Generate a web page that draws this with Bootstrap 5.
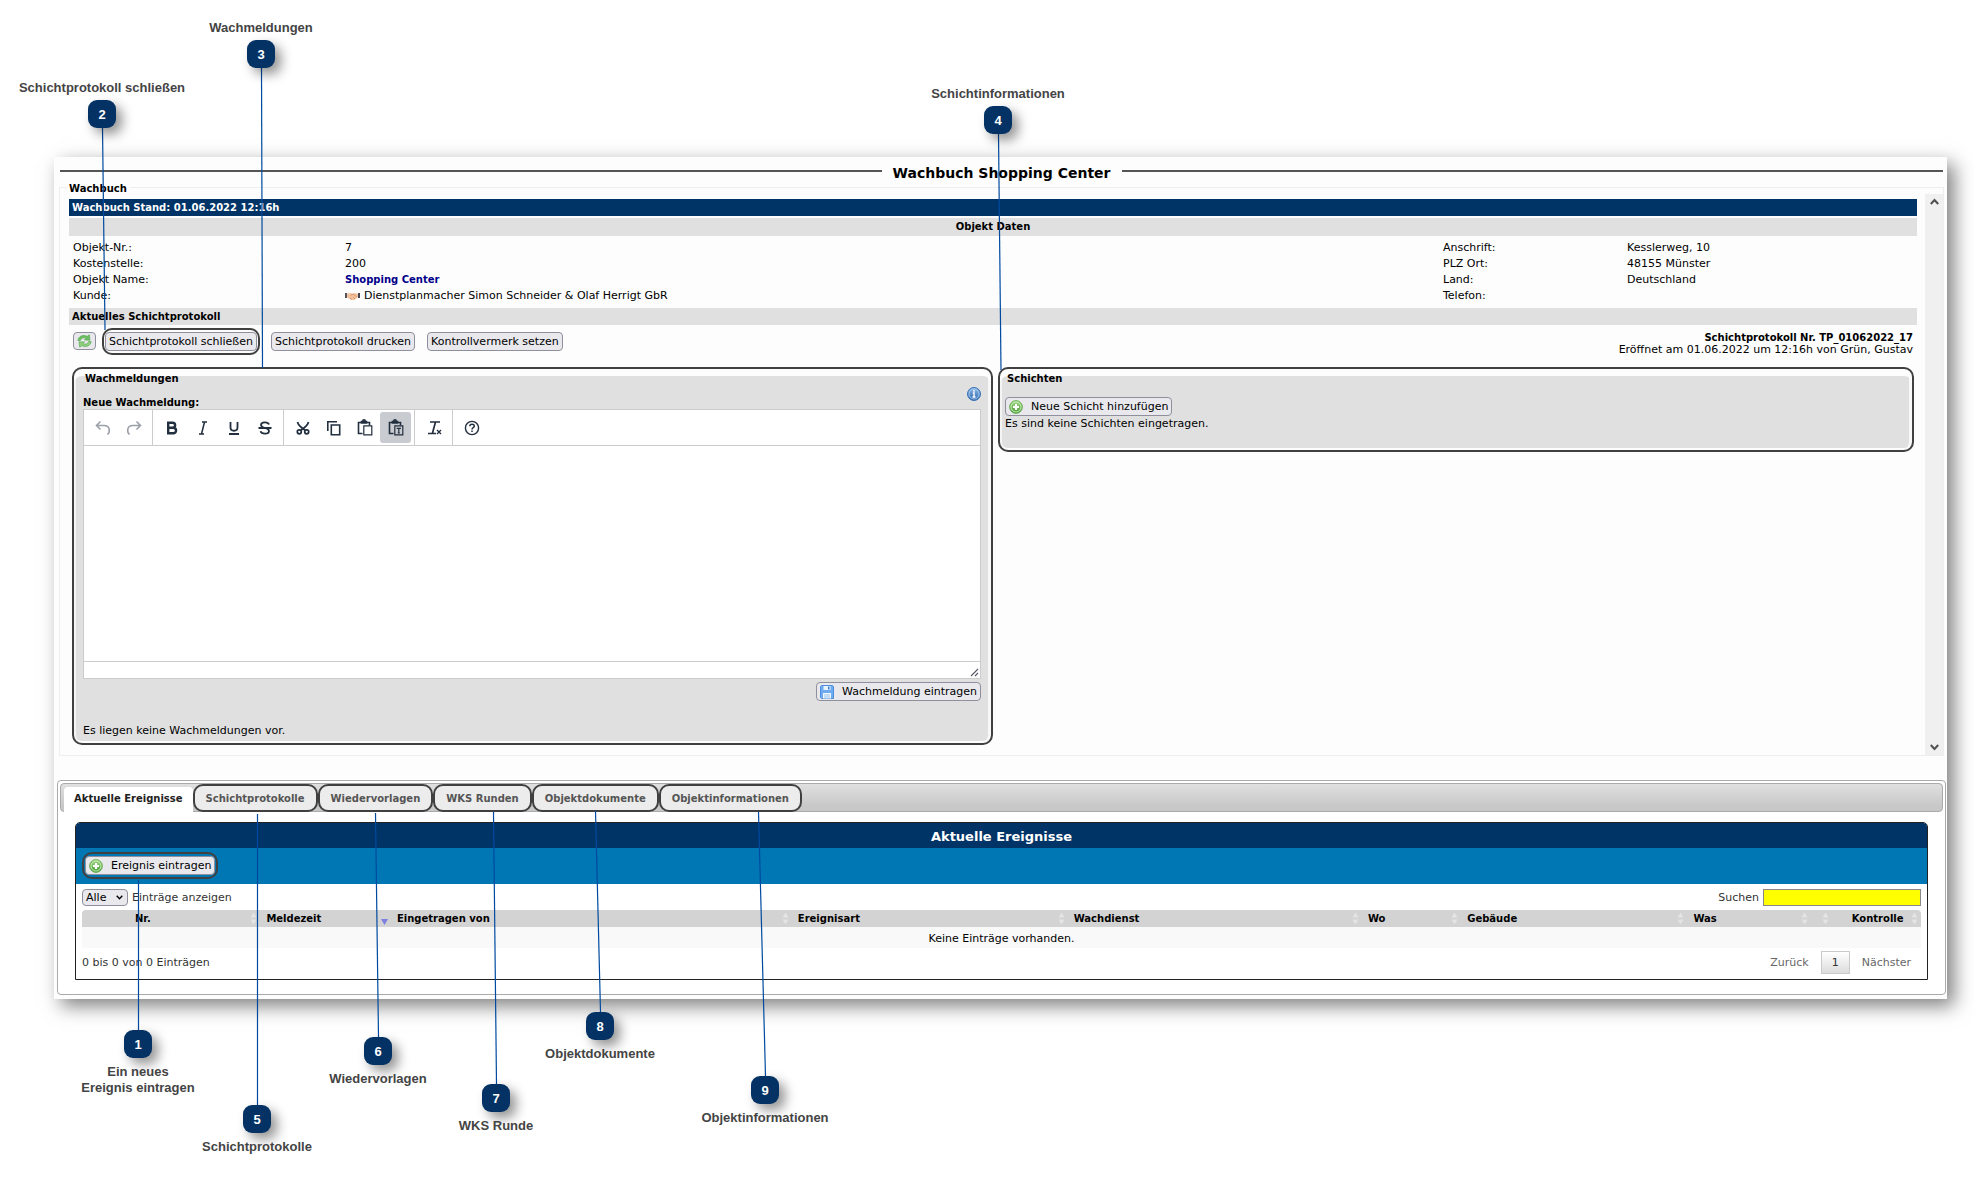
<!DOCTYPE html>
<html lang="de">
<head>
<meta charset="utf-8">
<meta name="viewport" content="width=device-width, initial-scale=1">
<title>Wachbuch Shopping Center</title>
<link href="https://cdn.jsdelivr.net/npm/bootstrap@5.3.0/dist/css/bootstrap.min.css" rel="stylesheet">
<style>
body{font-family:"DejaVu Sans",Verdana,sans-serif;font-size:11px;line-height:16px;color:#000;background:#fff}
.stage{padding:157px 27px 188px 54px}
.window{background:#fdfdfd;box-shadow:7px 7px 18px rgba(0,0,0,.5);padding:0 1px 4px 3px}
.title-row{height:30px;padding:0 3px;gap:11px}
.title-row hr{margin:0 0 3px;flex:1;border:0;border-top:2px solid #555;opacity:1}
.title-row h1{font-size:14px;font-weight:700;line-height:18px;margin:0;padding-top:2px}
.fs-box{border:1px solid #eee;margin:0 2px;height:569px;position:relative}
.fs-title{position:absolute;left:6px;top:-7px;padding:0 3px;background:#fdfdfd;font-weight:700;font-size:10px;line-height:16px}
.fs-body{padding:11px 8px 0 9px}
.sbar{width:18px;margin-top:6px;background:#f0f0f0;padding:4px 0}
.bar{font-weight:700;font-size:10px;line-height:16px;padding:1px 3px 0}
.bar-navy{background:#036;color:#fff}
.bar-grey{background:#e0e0e0}
.bar-center{margin-top:2px;padding-bottom:1px;text-align:center}
.facts{padding:4px}
.facts dt{font-weight:400}
.facts dt,.facts dd{margin:0;height:16px}
.facts .key-a{width:272px}
.facts .key-b{width:184px}
.facts .val-b{width:286px}
.facts a{color:#00008b;font-weight:700;font-size:10px;text-decoration:none}
.key-btn{font-family:inherit;font-size:11px;line-height:15px;color:#000;background:#e9e9ed;border:1px solid #8f8f9d;border-radius:4px;padding:1px 3px;display:inline-flex;align-items:center;gap:8px}
.ring-btn{border:2px solid #404040;border-radius:10px;padding:2px 1px;display:inline-flex}
.tools{padding:2px 4px 0;height:42px}
.tool-keys{height:28px}
.tool-keys .ring-btn{margin:0 11px 0 6px}
.tool-keys .key-btn+.key-btn{margin-left:12px}
.protocol-info{line-height:12px;padding-top:5px}
.protocol-info b{font-size:10px}
.panels{padding:0 3px;gap:5px}
.panel-box{background:#e0e0e0;border:2px solid #404040;border-radius:10px;box-shadow:inset 0 7px #fdfdfd,inset 2px 0 #f4f4f4,inset -3px 0 #f8f8f8,inset 0 -2px #fdfdfd}
.reports{flex:1 1 30px;padding:2px 10px 4px 9px}
.shifts{flex:1 1 25px;padding:2px 5px 18px}
.shifts h2{margin-bottom:10px}
.panel-box h2{font-size:10px;font-weight:700;line-height:16px;padding-left:2px}
.reports-head{height:26px}
.field-name{font-size:10px;font-weight:700;line-height:12px;display:block}
.reports-none{padding-top:22px}
.save-row{padding-top:3px}
.editor{background:#fff;border:1px solid #ccc;height:270px}
.ed-bar{height:36px;border-bottom:1px solid #ccc}
.ed-group{border-right:1px solid #ccc;padding:2px 3px}
.ed-group:last-child{border:0}
.ed-group button{border:0;background:none;width:31px;height:31px;padding:0;border-radius:3px;color:#222f3e}
.ed-group button.active{background:#c8cbcf}
.ed-group button:disabled{color:#9aa0a8}
.ed-group svg{display:block;margin:auto}
.ed-text{border:0;resize:none;outline:0;width:100%;background:#fff}
.ed-status{height:17px;border-top:1px solid #ccc;padding:0 1px 1px}
.tabs-box{border:1px solid #aaa;border-radius:4px;margin-top:24px;background:#fff;padding:2px}
.tabs-box .tabstrip{height:29px;border:1px solid #aaa;border-radius:4px;background:linear-gradient(#e0e0e0,#c8c8c8 80%);padding-left:3px;display:flex}
.tabstrip a{font-size:10px;font-weight:700;line-height:22px;height:28px;color:#555;text-decoration:none;background:#ececec;padding:2px 11px;white-space:nowrap;border-radius:10px;border:2px solid #404040;text-align:center}
.tabstrip a.tab-on{background:#fff;color:#212121;border:0;border-radius:4px 4px 0 0;margin-top:3px;padding:1px 10px;height:25px}
.events{margin:10px 15px 12px;border:1px solid #222;border-radius:5px 5px 0 0;overflow:hidden;color:#333}
.events h2{margin:0;background:#036;color:#fff;font-size:13px;font-weight:700;line-height:25px;text-align:center;padding-top:1px;height:25px}
.ev-tools{background:#0077b5;height:36px;padding:4px 6px}
.ev-main{padding:5px 6px}
.len-sel{font-family:inherit;font-size:11px;line-height:14px;height:17px;width:46px;padding:0 0 0 3px;border:1px solid #8f8f9d;border-radius:4px;color:#000;appearance:none;background:#e9e9ed}
.sel-wrap{position:relative}
.sel-wrap svg{position:absolute;right:5px;top:6px;pointer-events:none}
.find{width:158px;height:17px;background:#ff0;border:1px solid #888;padding:0 3px;font-size:11px}
.grid-table{width:100%;table-layout:fixed;margin-top:4px;border-collapse:separate;border-spacing:0;color:#000}
.grid-table th{background:#d3d3d3;font-size:10px;line-height:17px;height:17px;padding:0 0 0 6px;white-space:nowrap}
.grid-table th:first-child{border-radius:4px 0 0 0}
.grid-table th:last-child{border-radius:0 4px 0 0}
.grid-table td{background:#f9f9f9;line-height:19px;text-align:center;padding:2px 0 0}
.grid-table .hd{display:flex;align-items:center;justify-content:space-between;padding-right:3px}
.grid-table .hd-nr{padding-left:47px}
.grid-table .hd-check{padding-left:14px}
.grid-table .only-icon{justify-content:flex-end}
.ev-foot{padding-top:3px}
.pager a{color:#666;text-decoration:none}
.pager .page-now{border:1px solid #cacaca;background:linear-gradient(#fff,#dcdcdc);color:#333;width:29px;line-height:21px;text-align:center;margin:0 12px}
.pager a:last-child{padding-right:10px}
.lines{position:absolute;left:0;top:0;pointer-events:none}
.lines line{stroke:#004a9f;stroke-width:1.2}
.pin{position:absolute;width:200px;margin-left:-100px;text-align:center;font:700 13px/16px "Liberation Sans",Arial,sans-serif;color:#444;display:flex;flex-direction:column;align-items:center;gap:4px}
.pin-low{gap:6px}
.pin b{width:28px;height:28px;border-radius:9px;background:#043264;color:#fff;line-height:29px;box-shadow:6px 6px 12px rgba(0,0,0,.42)}
</style>
<script src="https://cdn.jsdelivr.net/npm/bootstrap@5.3.0/dist/js/bootstrap.bundle.min.js"></script>
</head>
<body class="position-relative">
<svg width="0" height="0" class="position-absolute">
  <defs>
    <linearGradient id="gGreen" x2="0" y2="1"><stop stop-color="#a5d88a"/><stop offset="1" stop-color="#3f9a2e"/></linearGradient>
    <linearGradient id="gBlue" x2="0" y2="1"><stop stop-color="#8ab8e6"/><stop offset="1" stop-color="#2f68b0"/></linearGradient>
    <symbol id="plus" viewBox="0 0 14 14"><circle cx="7" cy="7" r="6.4" fill="url(#gGreen)" stroke="#5aa844" stroke-width=".8"/><circle cx="7" cy="7" r="5" fill="none" stroke="#d4f0c4" stroke-width=".9"/><path d="M7 4v6M4 7h6" stroke="#fff" stroke-width="2.2"/></symbol>
    <symbol id="sort" viewBox="0 0 7 13"><path d="M3.500.5 6.500 5.500H.5zM3.500 12.500 6.500 7.500H.5z" fill="#e4e4e4"/></symbol>
  </defs>
</svg>
<main class="stage">
  <div class="window">
    <div class="title-row d-flex align-items-center">
      <hr><h1>Wachbuch Shopping Center</h1><hr>
    </div>
    <section class="fs-box d-flex">
      <span class="fs-title">Wachbuch</span>
      <div class="fs-body flex-grow-1">
        <div class="bar bar-navy">Wachbuch Stand: 01.06.2022 12:16h</div>
        <div class="bar bar-grey bar-center">Objekt Daten</div>
        <div class="facts d-flex">
          <dl class="key-a mb-0"><dt>Objekt-Nr.:</dt><dt>Kostenstelle:</dt><dt>Objekt Name:</dt><dt>Kunde:</dt></dl>
          <dl class="flex-grow-1 mb-0"><dd>7</dd><dd>200</dd><dd><a href="#">Shopping Center</a></dd>
            <dd><svg width="15" height="9" viewBox="0 0 15 9" class="me-1"><path d="M0 1h2v5H0z" fill="#556"/><path d="M13 1h2v5h-2z" fill="#445"/><path d="M2 1.500 6 1l1.500.7L9 1l4 .7V5L9.500 8h-3L2 5.500z" fill="#f3c3a0"/><path d="M5.500 3.500 8 2l4 3M5 6l2 1.500M8 5l2 2" stroke="#cf8a62" stroke-width=".8" fill="none"/></svg>Dienstplanmacher Simon Schneider &amp; Olaf Herrigt GbR</dd></dl>
          <dl class="key-b mb-0"><dt>Anschrift:</dt><dt>PLZ Ort:</dt><dt>Land:</dt><dt>Telefon:</dt></dl>
          <dl class="val-b mb-0"><dd>Kesslerweg, 10</dd><dd>48155 Münster</dd><dd>Deutschland</dd></dl>
        </div>
        <div class="bar bar-grey">Aktuelles Schichtprotokoll</div>
        <div class="tools d-flex justify-content-between">
          <div class="tool-keys d-flex align-items-center">
            <button class="key-btn" aria-label="Aktualisieren" type="button"><svg width="15" height="14" viewBox="0 0 15 14"><path d="M.8 6.500C1.500 2 6 .3 10.300 2.300L12.300.8l.7 5.400-5.600-.2 1.700-1.700C6.500 3.200 4 4.200 3.300 6.500z" fill="#6fbe62" stroke="#4da24b" stroke-width=".6"/><path d="M14.200 7.500c-.7 4.500-5.200 6.200-9.500 4.200l-2 1.500L2 7.800l5.600.2-1.700 1.700c2.600 1.100 5.100.1 5.800-2.200z" fill="#8fd07c" stroke="#4da24b" stroke-width=".6"/></svg></button>
            <span class="ring-btn"><button class="key-btn" type="button">Schichtprotokoll schließen</button></span>
            <button class="key-btn" type="button">Schichtprotokoll drucken</button>
            <button class="key-btn" type="button">Kontrollvermerk setzen</button>
          </div>
          <div class="protocol-info text-end"><b>Schichtprotokoll Nr. TP_01062022_17</b><br>Eröffnet am 01.06.2022 um 12:16h von Grün, Gustav</div>
        </div>
        <div class="panels d-flex align-items-start">
          <section class="panel-box reports">
            <div class="reports-head d-flex justify-content-between align-items-start">
              <h2 class="mb-0">Wachmeldungen</h2>
              <svg class="mt-3" width="14" height="14" viewBox="0 0 14 14"><circle cx="7" cy="7" r="6.500" fill="url(#gBlue)" stroke="#3d72b4"/><circle cx="7" cy="7" r="5" fill="none" stroke="#b4d2f0" stroke-width=".8"/><path d="M7 3v1.700M5.800 6H7v4M5.500 10h3" stroke="#fff" stroke-width="1.500"/></svg>
            </div>
            <label class="field-name" for="msg">Neue Wachmeldung:</label>
            <div class="editor d-flex flex-column">
              <div class="ed-bar d-flex">
                <div class="ed-group d-flex">
                  <button type="button" disabled aria-label="Rückgängig"><svg width="18" height="18" viewBox="0 0 18 18" fill="none" stroke="currentColor" stroke-width="1.600"><path d="M6.500 2.500 2.500 6.500l4 4M2.500 6.500H10c6 0 6.500 6 3.500 9"/></svg></button>
                  <button type="button" disabled aria-label="Wiederholen"><svg width="18" height="18" viewBox="0 0 18 18" fill="none" stroke="currentColor" stroke-width="1.600"><path d="m11.500 2.500 4 4-4 4M15.500 6.500H8c-6 0-6.500 6-3.500 9"/></svg></button>
                </div>
                <div class="ed-group d-flex">
                  <button type="button" aria-label="Fett"><svg width="18" height="18" viewBox="0 0 18 18" fill="none" stroke="currentColor" stroke-width="2.400"><path d="M5.200 3.700h4.300c3.500 0 3.500 5 0 5H5.200zM5.200 8.700h5c3.800 0 3.800 5.600 0 5.600h-5z"/></svg></button>
                  <button type="button" aria-label="Kursiv"><svg width="18" height="18" viewBox="0 0 18 18" fill="none" stroke="currentColor" stroke-width="1.500"><path d="M8 3h5M5 15h5M10.500 3l-3 12"/></svg></button>
                  <button type="button" aria-label="Unterstrichen"><svg width="18" height="18" viewBox="0 0 18 18" fill="none" stroke="currentColor" stroke-width="1.800"><path d="M5.500 3v5.500c0 4.300 7 4.300 7 0V3M4 15h10"/></svg></button>
                  <button type="button" aria-label="Durchgestrichen"><svg width="18" height="18" viewBox="0 0 18 18" fill="none" stroke="currentColor" stroke-width="1.800"><path d="M13 5.500C12 2.500 5 2.500 5 6c0 4 8 2 8 6 0 3.500-7.500 3.500-8.500.3M2.500 9h13"/></svg></button>
                </div>
                <div class="ed-group d-flex">
                  <button type="button" aria-label="Ausschneiden"><svg width="18" height="18" viewBox="0 0 18 18" fill="none" stroke="currentColor" stroke-width="1.700"><path d="M3.500 3c.8 4 4 5.800 7.800 8.300M14.500 3c-.8 4-4 5.800-7.800 8.300"/><circle cx="5.300" cy="12.800" r="2"/><circle cx="12.700" cy="12.800" r="2"/></svg></button>
                  <button type="button" aria-label="Kopieren"><svg width="18" height="18" viewBox="0 0 18 18" fill="none" stroke="currentColor" stroke-width="1.600"><path d="M2.800 12V2.800H12M6.300 6h8.400v9.700H6.300z"/></svg></button>
                  <button type="button" aria-label="Einfügen"><svg width="18" height="18" viewBox="0 0 18 18" fill="none" stroke="currentColor" stroke-width="1.600"><path d="M6.500 14.500H2.500v-11h11v3M5.500 4h5V2.500h-5z"/><circle cx="8" cy="2" r="1.200"/><path d="M7.800 6.800h8v9h-8z" stroke-width="1.200"/></svg></button>
                  <button type="button" class="active" aria-label="Als Text einfügen"><svg width="18" height="18" viewBox="0 0 18 18" fill="none" stroke="currentColor" stroke-width="1.600"><path d="M6.500 14.500H2.500v-11h11v3M5.500 4h5V2.500h-5z"/><circle cx="8" cy="2" r="1.200"/><path d="M7.800 6.800h8v9h-8z" stroke-width="1.200"/><path d="M9.700 9.300h4.200M11.800 9.300v5M10.700 14h2.200" stroke-width="1.200"/></svg></button>
                </div>
                <div class="ed-group d-flex">
                  <button type="button" aria-label="Formatierung entfernen"><svg width="18" height="18" viewBox="0 0 18 18" fill="none" stroke="currentColor" stroke-width="1.700"><path d="M5 3h10M10.500 3 7.500 14M3 14.500h8"/><path d="m12 11 4 4m0-4-4 4" stroke-width="1.300"/></svg></button>
                </div>
                <div class="ed-group d-flex">
                  <button type="button" aria-label="Hilfe"><svg width="18" height="18" viewBox="0 0 18 18" fill="none" stroke="currentColor" stroke-width="1.400"><circle cx="9" cy="9" r="6.600"/><path d="M6.800 7.300c0-3 4.500-2.600 4.500-.2C11.300 8.800 9 8.600 9 10.500M9 11.600v1.500" stroke-width="1.500"/></svg></button>
                </div>
              </div>
              <textarea id="msg" class="ed-text flex-grow-1"></textarea>
              <div class="ed-status d-flex justify-content-end align-items-end"><svg width="9" height="9" viewBox="0 0 9 9" stroke="#556" stroke-width="1.100"><path d="M1 8 8 1M5 8l3-3"/></svg></div>
            </div>
            <div class="save-row d-flex justify-content-end"><button class="key-btn" type="button"><svg width="14" height="14" viewBox="0 0 14 14"><path d="M1.500.5h11l1 1v12h-12l-1-1v-11z" fill="#6fabf0" stroke="#4a8fe0"/><path d="M3.500 1h7v4h-7z" fill="#e8f2fc"/><path d="M8 1.500h1.500v3H8z" fill="#3b7fd0"/><path d="M3 8h8v5.500H3z" fill="#eef5fd"/><path d="M4 10h6M4 12h6" stroke="#9cc3ee"/></svg>Wachmeldung eintragen</button></div>
            <p class="reports-none mb-0">Es liegen keine Wachmeldungen vor.</p>
          </section>
          <section class="panel-box shifts">
            <h2>Schichten</h2>
            <button class="key-btn d-flex" type="button"><svg width="14" height="14"><use href="#plus"/></svg>Neue Schicht hinzufügen</button>
            <p class="mb-0">Es sind keine Schichten eingetragen.</p>
          </section>
        </div>
      </div>
      <div class="sbar d-flex flex-column justify-content-between align-items-center">
        <svg width="9" height="8" viewBox="0 0 9 8" fill="none" stroke="#505050" stroke-width="2"><path d="m.8 6 3.700-4 3.700 4"/></svg>
        <svg width="9" height="8" viewBox="0 0 9 8" fill="none" stroke="#505050" stroke-width="2"><path d="m.8 2 3.700 4 3.700-4"/></svg>
      </div>
    </section>
    <section class="tabs-box">
      <nav class="tabstrip">
        <a class="tab-on" href="#">Aktuelle Ereignisse</a>
        <a href="#">Schichtprotokolle</a>
        <a href="#">Wiedervorlagen</a>
        <a href="#">WKS Runden</a>
        <a href="#">Objektdokumente</a>
        <a href="#">Objektinformationen</a>
      </nav>
      <div class="events">
        <h2>Aktuelle Ereignisse</h2>
        <div class="ev-tools"><span class="ring-btn"><button class="key-btn" type="button"><svg width="14" height="14"><use href="#plus"/></svg>Ereignis eintragen</button></span></div>
        <div class="ev-main">
          <div class="d-flex justify-content-between align-items-center">
            <div class="d-flex align-items-center gap-1">
              <span class="sel-wrap d-flex"><select class="len-sel" id="len"><option>Alle</option></select><svg width="7" height="5" viewBox="0 0 7 5" fill="none" stroke="#000" stroke-width="1.400"><path d="m.7.7 2.800 3L6.300.7"/></svg></span>
              <label for="len">Einträge anzeigen</label>
            </div>
            <div class="d-flex align-items-center"><label for="find" class="me-1">Suchen</label><input id="find" class="find" type="text"></div>
          </div>
          <table class="grid-table">
            <colgroup><col style="width:9.700%"><col style="width:7.100%"><col style="width:21.800%"><col style="width:15%"><col style="width:16%"><col style="width:5.400%"><col style="width:12.300%"><col style="width:6.700%"><col style="width:1.150%"><col></colgroup>
            <thead><tr>
              <th><div class="hd hd-nr">Nr.<svg width="7" height="13"><use href="#sort"/></svg></div></th>
              <th><div class="hd">Meldezeit<svg width="7" height="13" viewBox="0 0 7 13"><path d="M0 7h7l-3.500 6z" fill="#7f7fe0"/></svg></div></th>
              <th><div class="hd">Eingetragen von<svg width="7" height="13"><use href="#sort"/></svg></div></th>
              <th><div class="hd">Ereignisart<svg width="7" height="13"><use href="#sort"/></svg></div></th>
              <th><div class="hd">Wachdienst<svg width="7" height="13"><use href="#sort"/></svg></div></th>
              <th><div class="hd">Wo<svg width="7" height="13"><use href="#sort"/></svg></div></th>
              <th><div class="hd">Gebäude<svg width="7" height="13"><use href="#sort"/></svg></div></th>
              <th><div class="hd">Was<svg width="7" height="13"><use href="#sort"/></svg></div></th>
              <th><div class="hd only-icon"><svg width="7" height="13"><use href="#sort"/></svg></div></th>
              <th><div class="hd hd-check">Kontrolle<svg width="7" height="13"><use href="#sort"/></svg></div></th>
            </tr></thead>
            <tbody><tr><td colspan="10">Keine Einträge vorhanden.</td></tr></tbody>
          </table>
          <div class="ev-foot d-flex justify-content-between align-items-start">
            <div class="pt-1">0 bis 0 von 0 Einträgen</div>
            <div class="pager d-flex align-items-center"><a href="#">Zurück</a><a class="page-now" href="#">1</a><a href="#">Nächster</a></div>
          </div>
        </div>
      </div>
    </section>
  </div>
</main>
<svg class="lines" width="1974" height="1187">
  <line x1="102.500" y1="128" x2="105" y2="330"/><line x1="261.500" y1="68" x2="262.500" y2="368"/><line x1="998.500" y1="134" x2="1001" y2="370"/>
  <line x1="138.500" y1="880" x2="138.500" y2="1030"/><line x1="257.500" y1="814" x2="257.500" y2="1105"/><line x1="375.500" y1="813" x2="378.500" y2="1037"/>
  <line x1="493.500" y1="812" x2="496.500" y2="1084"/><line x1="595.500" y1="811" x2="600.500" y2="1012"/><line x1="758.500" y1="812" x2="765.500" y2="1076"/>
</svg>
<div class="pin" style="left:102px;top:80px">Schichtprotokoll schließen<b>2</b></div>
<div class="pin" style="left:261px;top:20px">Wachmeldungen<b>3</b></div>
<div class="pin" style="left:998px;top:86px">Schichtinformationen<b>4</b></div>
<div class="pin pin-low" style="left:138px;top:1030px"><b>1</b><span>Ein neues<br>Ereignis eintragen</span></div>
<div class="pin pin-low" style="left:257px;top:1105px"><b>5</b>Schichtprotokolle</div>
<div class="pin pin-low" style="left:378px;top:1037px"><b>6</b>Wiedervorlagen</div>
<div class="pin pin-low" style="left:496px;top:1084px"><b>7</b>WKS Runde</div>
<div class="pin pin-low" style="left:600px;top:1012px"><b>8</b>Objektdokumente</div>
<div class="pin pin-low" style="left:765px;top:1076px"><b>9</b>Objektinformationen</div>
</body>
</html>
